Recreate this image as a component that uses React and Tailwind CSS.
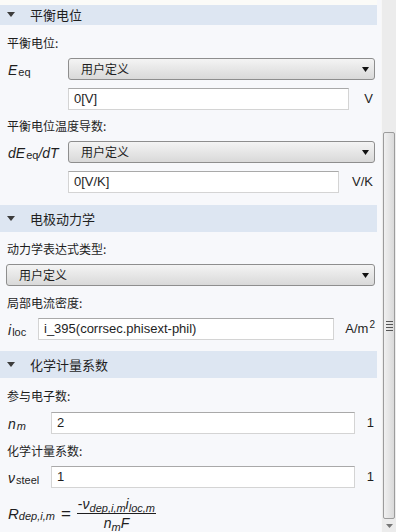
const cjk = { fontFamily: '"Noto Sans CJK SC", "Noto Sans", sans-serif' };
const latin = { fontFamily: '"Liberation Sans", "Noto Sans", sans-serif' };

function Header({ title }) {
  return (
    <div className="h-[27px] mr-[4px] bg-[#dde6f2] flex items-center">
      <svg width="8" height="5" viewBox="0 0 8 5" className="ml-[7px]">
        <path d="M0 0 L8 0 L4 5 Z" fill="#3c3c3c" />
      </svg>
      <span className="ml-[15px] text-[13px] text-[#1e1e1e]" style={cjk}>{title}</span>
    </div>
  );
}

function Label({ children, className = "" }) {
  return (
    <div className={"h-[16px] leading-[16px] text-[12px] text-[#1e1e1e] pl-[7px] " + className} style={cjk}>
      {children}
    </div>
  );
}

function Select({ className = "" }) {
  return (
    <div
      className={
        "h-[22px] flex items-center rounded-[3px] border border-[#8e8e8e] bg-gradient-to-b from-[#f4f4f4] to-[#d9d9d9] " +
        className
      }
    >
      <span className="pl-[12px] text-[12px] text-[#1e1e1e] flex-1" style={cjk}>用户定义</span>
      <svg width="7" height="5" viewBox="0 0 7 5" className="mr-[5px]">
        <path d="M0 0 L7 0 L3.5 5 Z" fill="#111" />
      </svg>
    </div>
  );
}

function Input({ value, className = "" }) {
  return (
    <div
      className={
        "h-[22px] flex items-center bg-white border border-[#d4d4d4] border-t-[#a9a9a9] pl-[5px] text-[13px] text-[#1e1e1e] " +
        className
      }
      style={latin}
    >
      {value}
    </div>
  );
}

function Sym({ main, sub }) {
  return (
    <span className="text-[14px] text-[#1e1e1e] whitespace-nowrap" style={latin}>
      <i>{main}</i>
      <sub className="text-[11px] not-italic relative top-[1px] ml-[1px]">{sub}</sub>
    </span>
  );
}

export default function App() {
  return (
    <div className="w-[396px] h-[532px] flex overflow-hidden bg-[#f7f8fb]">
      <div className="w-[381px] flex flex-col">
        <div className="h-[6px] bg-[#fbfbf8] mr-[4px]" />
        <Header title="平衡电位" />

        <Label className="mt-[10px]">平衡电位:</Label>
        <div className="mt-[6px] flex items-center pr-[6px]">
          <div className="w-[68px] pl-[8px]"><Sym main="E" sub="eq" /></div>
          <Select className="flex-1" />
        </div>
        <div className="mt-[7px] flex items-center pr-[8px] pl-[68px]">
          <Input value="0[V]" className="flex-1" />
          <span className="ml-[15px] text-[13px] text-[#1e1e1e]" style={latin}>V</span>
        </div>

        <Label className="mt-[8px]">平衡电位温度导数:</Label>
        <div className="mt-[6px] flex items-center pr-[6px]">
          <div className="w-[68px] pl-[8px]">
            <span className="text-[14px] text-[#1e1e1e] whitespace-nowrap" style={latin}>
              <i>dE</i>
              <sub className="text-[11px] relative top-[1px] ml-[1px]">eq</sub>
              <i>/dT</i>
            </span>
          </div>
          <Select className="flex-1" />
        </div>
        <div className="mt-[7px] flex items-center pr-[8px] pl-[68px]">
          <Input value="0[V/K]" className="flex-1" />
          <span className="ml-[13px] text-[13px] text-[#1e1e1e]" style={latin}>V/K</span>
        </div>

        <div className="mt-[12px]"><Header title="电极动力学" /></div>
        <Label className="mt-[9px]">动力学表达式类型:</Label>
        <div className="mt-[7px] pl-[6px] pr-[6px]">
          <Select />
        </div>
        <Label className="mt-[9px]">局部电流密度:</Label>
        <div className="mt-[6px] flex items-center pr-[6px]">
          <div className="w-[38px] pl-[8px]"><Sym main="i" sub="loc" /></div>
          <Input value="i_395(corrsec.phisext-phil)" className="flex-1" />
          <span className="ml-[11px] text-[13px] text-[#1e1e1e]" style={latin}>
            A/m<sup className="text-[10px] ml-[1px]">2</sup>
          </span>
        </div>

        <div className="mt-[10px]"><Header title="化学计量系数" /></div>
        <Label className="mt-[10px]">参与电子数:</Label>
        <div className="mt-[7px] flex items-center pr-[7px]">
          <div className="w-[51px] pl-[8px]"><Sym main="n" sub={<i>m</i>} /></div>
          <Input value="2" className="flex-1" />
          <span className="ml-[12px] text-[13px] text-[#1e1e1e]" style={latin}>1</span>
        </div>
        <Label className="mt-[8px]">化学计量系数:</Label>
        <div className="mt-[6px] flex items-center pr-[7px]">
          <div className="w-[51px] pl-[8px]"><Sym main="ν" sub="steel" /></div>
          <Input value="1" className="flex-1" />
          <span className="ml-[12px] text-[13px] text-[#1e1e1e]" style={latin}>1</span>
        </div>

        <div className="mt-[7px] pl-[8px] flex items-center text-[#1e1e1e]" style={latin}>
          <span className="text-[15px] whitespace-nowrap">
            <i>R</i>
            <sub className="text-[11px] relative top-[1px]"><i>dep,i,m</i></sub>
          </span>
          <span className="mx-[6px] text-[17px]">=</span>
          <div className="flex flex-col items-center">
            <span className="text-[14px] leading-[17px] whitespace-nowrap px-[1px]">
              -<i>ν</i>
              <sub className="text-[11px]"><i>dep,i,m</i></sub>
              <i>i</i>
              <sub className="text-[11px]"><i>loc,m</i></sub>
            </span>
            <div className="h-px w-full bg-[#1e1e1e]" />
            <span className="text-[14px] leading-[18px] whitespace-nowrap">
              <i>n</i>
              <sub className="text-[11px]"><i>m</i></sub>
              <i>F</i>
            </span>
          </div>
        </div>
      </div>

      <div className="w-[15px] bg-[#ececec] border-l border-[#f7f7f7] flex flex-col">
        <div className="h-[132px]" />
        <div className="h-[387px] mx-[1px] rounded-[2px] border border-[#9c9c9c] bg-gradient-to-r from-[#f0f0f0] to-[#dadada] flex items-center justify-center">
          <div className="flex flex-col gap-[2px]">
            <div className="w-[7px] h-px bg-[#555]" />
            <div className="w-[7px] h-px bg-[#555]" />
            <div className="w-[7px] h-px bg-[#555]" />
            <div className="w-[7px] h-px bg-[#555]" />
          </div>
        </div>
        <div className="flex-1 flex items-center justify-center">
          <svg width="7" height="4" viewBox="0 0 7 4">
            <path d="M0 0 L7 0 L3.5 4 Z" fill="#777" />
          </svg>
        </div>
      </div>
    </div>
  );
}
